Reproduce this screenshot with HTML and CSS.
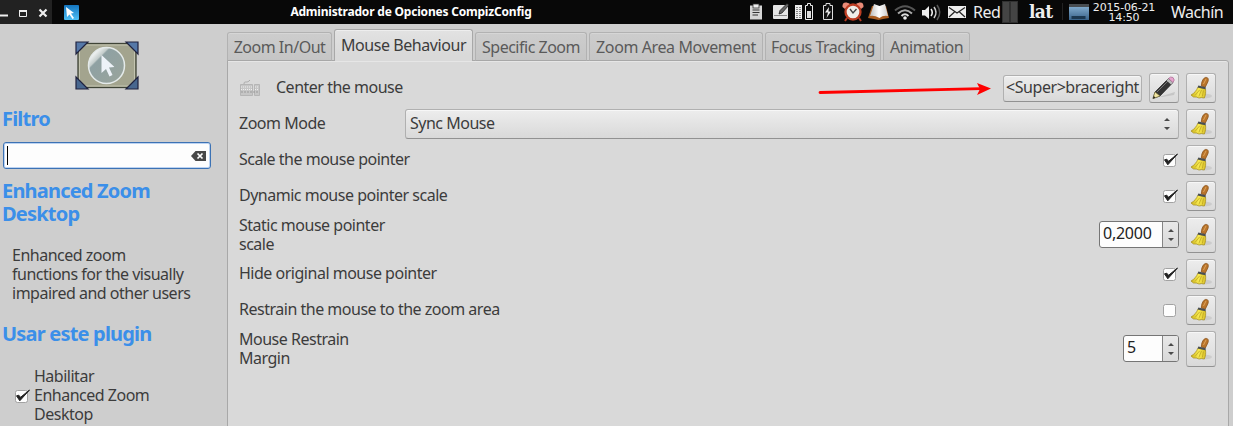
FILE: index.html
```html
<!DOCTYPE html>
<html lang="es">
<head>
<meta charset="utf-8">
<title>Administrador de Opciones CompizConfig</title>
<link rel="stylesheet" href="styles.css">
</head>
<body>
<svg class="defs" width="0" height="0">
  <defs>
    <linearGradient id="straw" x1="0" x2="1"><stop offset="0" stop-color="#c9b01c"/><stop offset=".5" stop-color="#f8ea50"/><stop offset="1" stop-color="#d9c02a"/></linearGradient>
    <linearGradient id="lens" x1="0" y1="0" x2="1" y2="1"><stop offset=".12" stop-color="#fff"/><stop offset=".28" stop-color="#c3cccb"/><stop offset=".31" stop-color="#8fa1a3"/><stop offset="1" stop-color="#9aa49b"/></linearGradient>
    <linearGradient id="blue" x1="0" y1="0" x2="0" y2="1"><stop offset="0" stop-color="#1475bf"/><stop offset="1" stop-color="#4fc0f5"/></linearGradient>
    <linearGradient id="paper" x1="0" x2="1"><stop offset="0" stop-color="#bbb"/><stop offset=".5" stop-color="#fff"/><stop offset="1" stop-color="#ccc"/></linearGradient>
    <linearGradient id="drawer" x1="0" y1="0" x2="0" y2="1"><stop offset="0" stop-color="#7fa9cb"/><stop offset="1" stop-color="#386289"/></linearGradient>
  </defs>
  <symbol id="broom" viewBox="0 0 24 24">
    <ellipse cx="14" cy="20" rx="9" ry="2.500" fill="#b9b9b9" opacity=".5"/>
    <path d="M12.300 10C12.300 7 13.500 2.500 16.300 1.500C19 1 20 3 18.800 6L16.300 11Z" fill="#b9742a" stroke="#8a531c" stroke-width=".8"/>
    <path d="M14.500 8L17 3" stroke="#dda35c" stroke-width="1"/>
    <path d="M9 11L16.500 13C17 16 16.500 19.500 15.300 22L12.500 21.500L10 22L7.500 21L4.500 21L2 19C5.500 17 7.500 14.500 9 11Z" fill="url(#straw)" stroke="#a48c18" stroke-width=".7"/>
    <path d="M10.500 14L6 19.500M12.500 14L9.800 20.500M14.500 14.500L13.300 20.500" stroke="#b7a020" stroke-width=".7" fill="none"/>
    <path d="M9.300 9.500L16.800 11.300L16.500 13.300L8.600 11.400Z" fill="#4a4f52"/>
  </symbol>
  <symbol id="tick" viewBox="0 0 16 16">
    <rect x="1.500" y="2.500" width="12" height="12" rx="2" fill="#fdfdfd" stroke="#a2a2a2"/>
    <path d="M2.500 7.800L5.800 12.800L15.500 2L6.500 9.300L4.800 7.200Z" fill="#222" stroke="#222" stroke-width="1"/>
  </symbol>
  <symbol id="empty" viewBox="0 0 16 16"><rect x="1.500" y="2.500" width="12" height="12" rx="2" fill="#fdfdfd" stroke="#a2a2a2"/></symbol>
  <symbol id="steps" viewBox="0 0 8 14"><path d="M1 4L4 1L7 4ZM1 10L4 13L7 10Z" fill="#4a4a4a"/></symbol>
  <symbol id="pointer" viewBox="0 0 14 22"><path d="M1 0L14 12L8.500 12.500L12 20L9 21.500L5.500 14L1 18Z"/></symbol>
</svg>

<header class="topbar">
  <div class="wm">
    <svg width="52" height="24"><path d="M0 15.500H8" stroke="#eee" stroke-width="2"/><path d="M19.500 10.500H26.500V16.500H19.500Z" fill="none" stroke="#eee"/><path d="M19 11H27" stroke="#eee" stroke-width="2"/><path d="M39.500 9.500L46.500 16.500M46.500 9.500L39.500 16.500" stroke="#eee" stroke-width="2.200"/></svg>
  </div>
  <svg class="app" width="15" height="15"><rect width="15" height="15" rx="1" fill="url(#blue)"/><path d="M2 2L10 8L7 8.500L10 13L8.500 14L5.500 9.500L3 12Z" fill="#fff"/></svg>
  <h1 class="title">Administrador de Opciones CompizConfig</h1>
  <svg class="tray" width="232" height="24" viewBox="740 0 232 24">
    <path d="M750 5.500H762V19.500H750Z" fill="#d5d5d5"/><rect x="753" y="4" width="6" height="4" fill="#eee" stroke="#333" stroke-width=".8"/><path d="M752.500 10H759.500M752.500 12.500H759.500M752.500 15H758" stroke="#333"/>
    <rect x="773" y="5" width="15" height="14" rx="1" fill="#e4e4e4"/><path d="M774 15.500H787" stroke="#888"/><path d="M779 14L780 10.500L787 3.500L789 5L782 13Z" fill="#666" stroke="#111" stroke-width=".7"/>
    <rect x="795" y="5" width="7" height="14" fill="#eee"/><path d="M797 7V18M800 7V18" stroke="#222" stroke-dasharray="1 1"/>
    <path d="M805.500 5.500H807.500V3.500H810.500V5.500H812.500V19.500H805.500Z" fill="#080808" stroke="#eee"/><rect x="807" y="11" width="4" height="7" fill="#ddd"/>
    <path d="M823.500 5.500H826V3.500H830V5.500H832.500V19.500H823.500Z" fill="#111" stroke="#ddd"/><path d="M829 7L825 12.500H828L826.500 18L831 11.500H828.500Z" fill="#eee"/>
    <path d="M842.500 7C842 2 846 1.500 850 4L845 9ZM863.500 7C864 2 860 1.500 856 4L861 9Z" fill="#e98b78"/><path d="M847 18L845 21M859 18L861 21" stroke="#b43a22" stroke-width="2"/><circle cx="853" cy="12" r="7.500" fill="#f1eee8" stroke="#bd3d22" stroke-width="2.300"/><path d="M850 9L853 13L856.500 9" fill="none" stroke="#444" stroke-width="1.400"/>
    <path d="M868 18L872 6H886L889 18L883 19L878.500 20L874 19Z" fill="#a95c20"/><path d="M870 16L874 4L879.500 6V18Q874 15 870 16ZM879.500 6L885 4L888 16Q883 15 879.500 18Z" fill="url(#paper)"/>
    <g fill="none" stroke-width="2"><path d="M895 10.500Q905 2 915 10.500" stroke="#555"/><path d="M898 13.500Q905 7 912 13.500" stroke="#aaa"/><path d="M901.500 16Q905 12.500 908.500 16" stroke="#ddd"/></g><circle cx="905" cy="18" r="1.800" fill="#eee"/>
    <path d="M922 10H925L929 6V19L925 15.500H922Z" fill="#eee"/><g fill="none" stroke-width="1.600"><path d="M931 9Q933.500 12.500 931 16" stroke="#eee"/><path d="M934 7Q938 12.500 934 18" stroke="#ccc"/><path d="M937 5Q942.500 12.500 937 20" stroke="#555"/></g>
    <rect x="948" y="6" width="18" height="12" fill="#eee"/><path d="M949 7.500L957 13L965 7.500M949 17L954.500 12M965 17L959.500 12" stroke="#222" stroke-width="1.200" fill="none"/>
  </svg>
  <span class="net">Red</span>
  <svg class="bars" width="16" height="24"><rect x=".5" y="1.500" width="7" height="21" fill="#444" stroke="#303030"/><rect x="8.500" y="1.500" width="7" height="21" fill="#444" stroke="#303030"/></svg>
  <span class="lat">lat</span>
  <svg class="drawer" width="28" height="24"><path d="M1.500 3V20" stroke="#222"/><path d="M8 4H28V7H8Z" fill="#484d51"/><path d="M8 7H28V20H8Z" fill="url(#drawer)"/><path d="M10.500 19V16H24.500V19Z" fill="#1c3850"/></svg>
  <time class="clock">2015-06-21<br>14:50</time>
  <span class="user">Wachín</span>
</header>

<div class="window">
  <aside class="sidebar">
    <svg class="emblem" width="64" height="49">
      <rect x="3" y="2.500" width="58" height="44" fill="#a3a48e" stroke="#3f4437" stroke-width="1.300"/><rect x="4.500" y="4" width="55" height="41" fill="none" stroke="#c3c4b0"/>
      <g fill="#5578a8" stroke="#20223f" stroke-width="1.200"><path d="M1 1H13L1 13Z"/><path d="M51 1H63V13Z"/><path d="M1 36L13 48H1Z" fill="#48678f"/><path d="M63 36V48H51Z" fill="#48678f"/></g>
      <circle cx="31.500" cy="24.500" r="18" fill="url(#lens)" stroke="#e4eaea" stroke-width="1.500"/>
      <use href="#pointer" x="25.500" y="14" width="14" height="22" fill="#edf2f8"/>
    </svg>
    <h2 class="heading">Filtro</h2>
    <div class="search"><i class="caret"></i>
      <svg width="15" height="10"><path d="M0 5L4.500 0H15V10H4.500Z" fill="#484848"/><path d="M6.500 2.500L11.500 7.500M11.500 2.500L6.500 7.500" stroke="#fff" stroke-width="1.700"/></svg>
    </div>
    <h2 class="heading name">Enhanced Zoom<br>Desktop</h2>
    <p class="about">Enhanced zoom<br>functions for the visually<br>impaired and other users</p>
    <h2 class="heading use">Usar este plugin</h2>
    <label class="enable"><svg width="16" height="16"><use href="#tick"/></svg><span>Habilitar<br>Enhanced Zoom<br>Desktop</span></label>
  </aside>

  <main class="main">
    <nav class="tabs">
      <span class="tab t1">Zoom In/Out</span><span class="tab t2 active">Mouse Behaviour</span><span class="tab t3">Specific Zoom</span><span class="tab t4">Zoom Area Movement</span><span class="tab t5">Focus Tracking</span><span class="tab t6">Animation</span>
    </nav>
    <section class="panel">
      <div class="row">
        <svg class="keyboard" width="22" height="18"><path d="M5 5C5 1 8 5 11 1" fill="none" stroke="#aaa"/><path d="M1.500 5.500H13.500V16.500H1.500ZM15.500 5.500H20.500V16.500H15.500Z" fill="#c6c6c6" stroke="#b5b5b5"/><path d="M2 8H13M2 10.500H13M16 8H20M16 10.500H20" stroke="#eee" stroke-dasharray="1 1"/><path d="M2 13H20" stroke="#999" stroke-dasharray="2 1"/></svg>
        <span class="label">Center the mouse</span>
        <svg class="arrow" width="174" height="14"><path d="M2 9.500L163 5.600" stroke="red" stroke-width="2.800" stroke-linecap="round"/><path d="M159 0L173 5.500L159 12L162 6Z" fill="red"/></svg>
        <button class="btn key">&lt;Super&gt;braceright</button>
        <button class="btn icon"><svg width="24" height="24"><path d="M7 21L23 16L22 19L10 21Z" fill="#bbb" opacity=".7"/><path d="M1 22.500L3 16L16.500 2.500L21 6.500L8 20Z" fill="#353535" stroke="#222" stroke-width=".7"/><path d="M1 22.500L3 16L8 20Z" fill="#f2e6a2" stroke="#776e35" stroke-width=".6"/><path d="M1 22.500L1.800 20L3.300 21.500Z" fill="#111"/><path d="M5 16L17 4" stroke="#777"/><path d="M14.500 4.500L16.500 2.500L21 6.500L19 8.500Z" fill="#bbb"/><path d="M16.500 2.500Q18.500 0 21 1.500Q23.500 4 21 6.500Z" fill="#e6a4ce" stroke="#a66b91" stroke-width=".7"/></svg></button>
        <button class="btn icon"><svg width="24" height="24"><use href="#broom"/></svg></button>
      </div>
      <div class="row"><span class="label mode">Zoom Mode</span><div class="btn combo"><span>Sync Mouse</span><svg width="8" height="14"><use href="#steps"/></svg></div><button class="btn icon"><svg width="24" height="24"><use href="#broom"/></svg></button></div>
      <div class="row"><span class="label">Scale the mouse pointer</span><svg class="check" width="16" height="16"><use href="#tick"/></svg><button class="btn icon"><svg width="24" height="24"><use href="#broom"/></svg></button></div>
      <div class="row"><span class="label">Dynamic mouse pointer scale</span><svg class="check" width="16" height="16"><use href="#tick"/></svg><button class="btn icon"><svg width="24" height="24"><use href="#broom"/></svg></button></div>
      <div class="row tall"><span class="label">Static mouse pointer<br>scale</span><div class="spin wide"><span class="value">0,2000</span><span class="step"><svg width="8" height="14"><use href="#steps"/></svg></span></div><button class="btn icon"><svg width="24" height="24"><use href="#broom"/></svg></button></div>
      <div class="row"><span class="label">Hide original mouse pointer</span><svg class="check" width="16" height="16"><use href="#tick"/></svg><button class="btn icon"><svg width="24" height="24"><use href="#broom"/></svg></button></div>
      <div class="row"><span class="label">Restrain the mouse to the zoom area</span><svg class="check" width="16" height="16"><use href="#empty"/></svg><button class="btn icon"><svg width="24" height="24"><use href="#broom"/></svg></button></div>
      <div class="row tall"><span class="label">Mouse Restrain<br>Margin</span><div class="spin"><span class="value">5</span><span class="step"><svg width="8" height="14"><use href="#steps"/></svg></span></div><button class="btn icon"><svg width="24" height="24"><use href="#broom"/></svg></button></div>
    </section>
  </main>
</div>
</body>
</html>
```

FILE: styles.css
```css
* { box-sizing: border-box; }
body { margin: 0; width: 1233px; height: 426px; overflow: hidden; background: #cecece; color: #3c3c3c; font: 16px/19px "Noto Sans", "Open Sans", sans-serif; letter-spacing: -0.49px; }
svg { display: block; flex: none; }
.defs { position: absolute; }
h1, h2, p { margin: 0; }

.topbar { display: flex; align-items: center; height: 24px; background: #080808; color: #eee; white-space: nowrap; }
.wm { width: 52px; height: 24px; background: #222; }
.app { margin-left: 12px; }
.title { width: 661px; padding-left: 3px; padding-bottom: 1px; text-align: center; font-size: 12px; letter-spacing: -0.2px; font-weight: bold; color: #fff; }
.net { width: 28px; margin-left: 1px; }
.bars { margin-left: 1px; }
.lat { width: 32px; margin-left: 11px; padding-bottom: 1px; font: bold 19px/23px "DejaVu Serif", serif; font-stretch: condensed; letter-spacing: -0.7px; }
.clock { width: 66px; margin-left: 2px; padding-top: 2px; text-align: center; font: 11px/10px "DejaVu Sans", sans-serif; letter-spacing: -0.15px; }
.user { margin-left: 14px; }

.window { display: flex; height: 402px; }
.sidebar { display: flex; flex-direction: column; width: 227px; padding: 17px 0 0 2px; }
.emblem { margin-left: 73px; }
.heading { margin-top: 17px; font-size: 20px; line-height: 23px; font-weight: bold; color: #3b8fe9; letter-spacing: -0.8px; }
.search { display: flex; align-items: center; justify-content: space-between; width: 208px; height: 27px; margin: 12px 0 0 1px; padding: 0 4px 0 3px; background: #fdfdfd; border: 1px solid #3c72b4; border-radius: 3px; box-shadow: inset 0 0 0 1px #bcd3f2; }
.caret { width: 1px; height: 19px; background: #000; }
.name { margin-top: 10px; }
.about { margin: 21px 0 0 10px; }
.use { margin-top: 19px; }
.enable { display: flex; align-items: center; gap: 4px; margin: 22px 0 0 12px; }

.main { flex: none; width: 1002px; padding-top: 5px; }
.tabs { position: relative; z-index: 1; display: flex; align-items: flex-end; gap: 2px; height: 32px; }
.tab { height: 29px; padding-top: 5px; border: 1px solid #b2b2b2; border-bottom-color: #a8a8a8; border-radius: 3px 3px 0 0; background: linear-gradient(#cdcdcd, #c5c5c5); color: #5a5a5a; text-align: center; white-space: nowrap; box-shadow: inset 0 1px #d6d6d6; }
.active { height: 32px; padding-top: 6px; border-color: #a8a8a8; border-bottom: 0; background: linear-gradient(#e2e2e2, #d9d9d9 80%); color: #3c3c3c; box-shadow: inset 0 1px #eee; }
.t1 { width: 105px; }
.t2 { width: 139px; letter-spacing: -0.43px; }
.t3 { width: 112px; }
.t4 { width: 174px; letter-spacing: -0.4px; }
.t5 { width: 116px; }
.t6 { width: 87px; }
.panel { display: flex; flex-direction: column; gap: 6px; height: 380px; margin-top: -1px; padding: 12px 12px 0 11px; border: 1px solid #a8a8a8; border-radius: 0 3px 0 0; background: #d9d9d9; box-shadow: inset 0 1px #e6e6e6; }
.row { display: flex; align-items: center; height: 30px; flex: none; }
.tall { height: 36px; }
.label { margin-right: auto; padding-bottom: 2px; white-space: nowrap; }
.tall .label { padding-bottom: 0; }
.keyboard { margin-right: 15px; }
.arrow { margin: 4px 11px 0 0; }
.btn { margin: 0; padding: 0; border: 1px solid #b0b0b0; border-bottom-color: #929292; border-radius: 3px; background: linear-gradient(#ededed, #d9d9d9); color: inherit; font: inherit; letter-spacing: inherit; box-shadow: inset 0 1px #f7f7f7; }
.icon { display: grid; place-items: center; flex: none; width: 30px; height: 100%; margin-left: 7px; }
.key { width: 139px; height: 27px; padding-bottom: 2px; letter-spacing: -0.45px; }
.mode { width: 166px; margin: 0; }
.combo { display: flex; align-items: center; justify-content: space-between; flex: 1; height: 30px; padding: 0 7px 0 4px; }
.combo span { padding-bottom: 2px; }
.check { margin-right: 1px; }
.spin { display: flex; width: 56px; height: 27px; border: 1px solid #757575; border-radius: 3px; background: #fdfdfd; color: #222; line-height: 23px; }
.tall .spin { margin-bottom: 1px; }
.wide { width: 80px; }
.value { flex: 1; padding-left: 3px; letter-spacing: -0.25px; }
.step { display: grid; place-items: center; width: 16px; border-left: 1px solid #858585; border-radius: 0 2px 2px 0; background: linear-gradient(#e8e8e8, #d9d9d9); }
```
